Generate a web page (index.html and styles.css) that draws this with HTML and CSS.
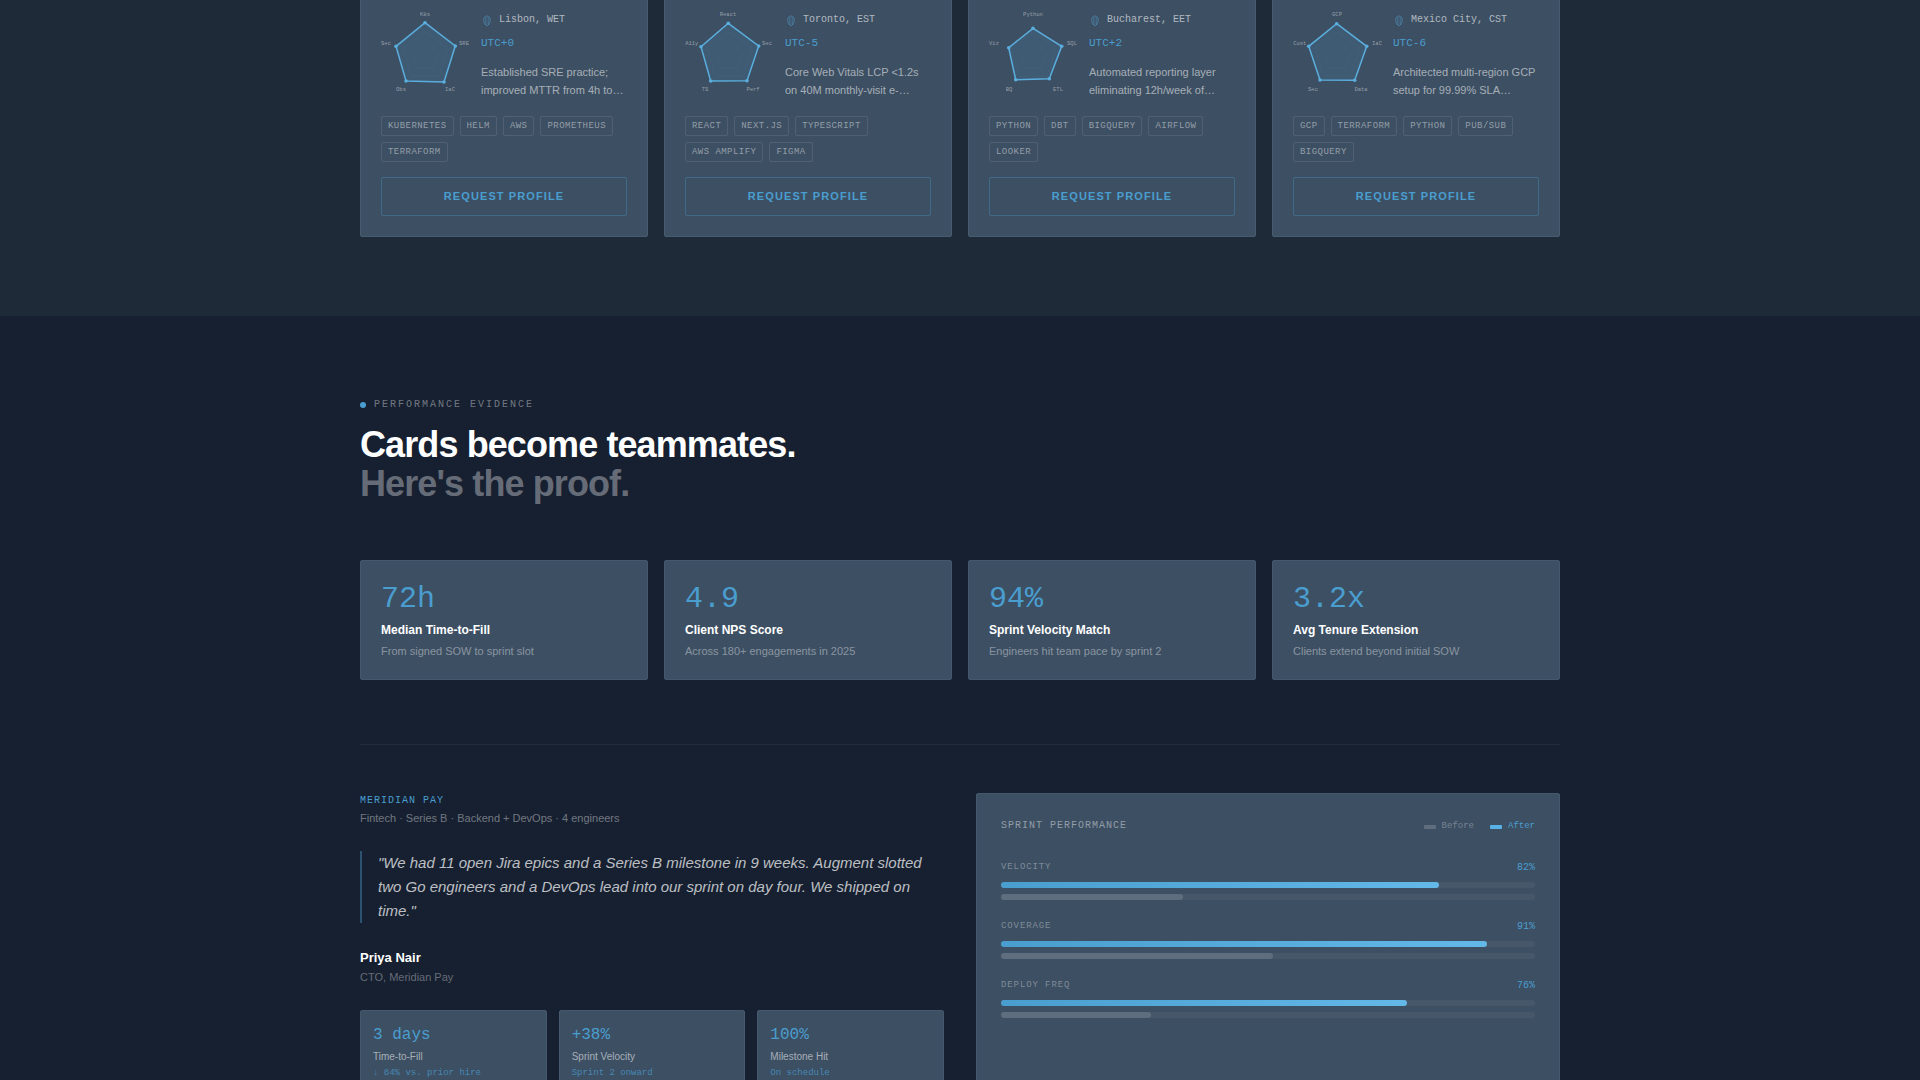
FILE: index.html
```html
<!DOCTYPE html>
<html>
<head>
    <link rel="stylesheet" href="styles.css">
</head>
<body>
    <section class="talent-section">
        <div class="wrap card-grid">
            <div class="card">
                <div class="card-top">
                    <svg class="radar" width="90" height="90" viewBox="0 0 90 90">
                        <polygon class="ring" points="44,32 58,42 53,58 36,58 31,42"/>
                        <polygon class="ring" points="44,22 67,38 58,66 31,66 22,38"/>
                        <polygon class="shape" points="44,12.7 74.3,36 63,72 25,71 15,36.3"/>
                        <circle class="dot" cx="44" cy="12.7" r="1.8"/><circle class="dot" cx="74.3" cy="36" r="1.8"/><circle class="dot" cx="63" cy="72" r="1.8"/><circle class="dot" cx="25" cy="71" r="1.8"/><circle class="dot" cx="15" cy="36.3" r="1.8"/>
                        <text x="44" y="6">K8s</text><text x="83" y="35">SRE</text><text x="69" y="81">IaC</text><text x="20" y="81">Obs</text><text x="5" y="35">Sec</text>
                    </svg>
                    <div class="card-info">
                        <div class="location">
                            <svg class="pin" width="12" height="12" viewBox="0 0 12 12"><path d="M6 1C4 1 2.7 2.6 2.7 5c0 2.6 1.6 5 3.3 6 1.7-1 3.3-3.4 3.3-6C9.3 2.6 8 1 6 1z"/><path d="M4.8 2v8M7.2 2v8"/></svg>
                            Lisbon, WET
                        </div>
                        <div class="utc">UTC+0</div>
                        <p class="desc">Established SRE practice; improved MTTR from 4h to…</p>
                    </div>
                </div>
                <div class="tags">
                    <span class="tag">Kubernetes</span><span class="tag">Helm</span><span class="tag">AWS</span><span class="tag">Prometheus</span><span class="tag">Terraform</span>
                </div>
                <button class="request-btn" type="button">REQUEST PROFILE</button>
            </div>

            <div class="card">
                <div class="card-top">
                    <svg class="radar" width="90" height="90" viewBox="0 0 90 90">
                        <polygon class="ring" points="44,32 58,42 53,58 36,58 31,42"/>
                        <polygon class="ring" points="44,22 67,38 58,66 31,66 22,38"/>
                        <polygon class="shape" points="43.3,13.3 73.7,36 62,70.7 25.7,71 16,36.7"/>
                        <circle class="dot" cx="43.3" cy="13.3" r="1.8"/><circle class="dot" cx="73.7" cy="36" r="1.8"/><circle class="dot" cx="62" cy="70.7" r="1.8"/><circle class="dot" cx="25.7" cy="71" r="1.8"/><circle class="dot" cx="16" cy="36.7" r="1.8"/>
                        <text x="43" y="6">React</text><text x="82" y="35">Sec</text><text x="68" y="81">Perf</text><text x="20" y="81">TS</text><text x="6.8" y="35">A11y</text>
                    </svg>
                    <div class="card-info">
                        <div class="location">
                            <svg class="pin" width="12" height="12" viewBox="0 0 12 12"><path d="M6 1C4 1 2.7 2.6 2.7 5c0 2.6 1.6 5 3.3 6 1.7-1 3.3-3.4 3.3-6C9.3 2.6 8 1 6 1z"/><path d="M4.8 2v8M7.2 2v8"/></svg>
                            Toronto, EST
                        </div>
                        <div class="utc">UTC-5</div>
                        <p class="desc">Core Web Vitals LCP &lt;1.2s on 40M monthly-visit e-…</p>
                    </div>
                </div>
                <div class="tags">
                    <span class="tag">React</span><span class="tag">Next.js</span><span class="tag">TypeScript</span><span class="tag">AWS Amplify</span><span class="tag">Figma</span>
                </div>
                <button class="request-btn" type="button">REQUEST PROFILE</button>
            </div>

            <div class="card">
                <div class="card-top">
                    <svg class="radar" width="90" height="90" viewBox="0 0 90 90">
                        <polygon class="ring" points="44,32 58,42 53,58 36,58 31,42"/>
                        <polygon class="ring" points="44,22 67,38 58,66 31,66 22,38"/>
                        <polygon class="shape" points="44,18.3 72.7,36.3 60.3,68.7 26.7,69.7 19.7,37.7"/>
                        <circle class="dot" cx="44" cy="18.3" r="1.8"/><circle class="dot" cx="72.7" cy="36.3" r="1.8"/><circle class="dot" cx="60.3" cy="68.7" r="1.8"/><circle class="dot" cx="26.7" cy="69.7" r="1.8"/><circle class="dot" cx="19.7" cy="37.7" r="1.8"/>
                        <text x="44" y="6">Python</text><text x="83" y="35">SQL</text><text x="69" y="81">ETL</text><text x="20" y="81">BQ</text><text x="5" y="35">Viz</text>
                    </svg>
                    <div class="card-info">
                        <div class="location">
                            <svg class="pin" width="12" height="12" viewBox="0 0 12 12"><path d="M6 1C4 1 2.7 2.6 2.7 5c0 2.6 1.6 5 3.3 6 1.7-1 3.3-3.4 3.3-6C9.3 2.6 8 1 6 1z"/><path d="M4.8 2v8M7.2 2v8"/></svg>
                            Bucharest, EET
                        </div>
                        <div class="utc">UTC+2</div>
                        <p class="desc">Automated reporting layer eliminating 12h/week of…</p>
                    </div>
                </div>
                <div class="tags">
                    <span class="tag">Python</span><span class="tag">dbt</span><span class="tag">BigQuery</span><span class="tag">Airflow</span><span class="tag">Looker</span>
                </div>
                <button class="request-btn" type="button">REQUEST PROFILE</button>
            </div>

            <div class="card">
                <div class="card-top">
                    <svg class="radar" width="90" height="90" viewBox="0 0 90 90">
                        <polygon class="ring" points="44,32 58,42 53,58 36,58 31,42"/>
                        <polygon class="ring" points="44,22 67,38 58,66 31,66 22,38"/>
                        <polygon class="shape" points="43.7,13.7 73.7,36.3 61.7,70.3 27,70 15.7,36.3"/>
                        <circle class="dot" cx="43.7" cy="13.7" r="1.8"/><circle class="dot" cx="73.7" cy="36.3" r="1.8"/><circle class="dot" cx="61.7" cy="70.3" r="1.8"/><circle class="dot" cx="27" cy="70" r="1.8"/><circle class="dot" cx="15.7" cy="36.3" r="1.8"/>
                        <text x="44" y="6">GCP</text><text x="84" y="35">IaC</text><text x="68" y="81">Data</text><text x="20" y="81">Sec</text><text x="6.8" y="35">Cost</text>
                    </svg>
                    <div class="card-info">
                        <div class="location">
                            <svg class="pin" width="12" height="12" viewBox="0 0 12 12"><path d="M6 1C4 1 2.7 2.6 2.7 5c0 2.6 1.6 5 3.3 6 1.7-1 3.3-3.4 3.3-6C9.3 2.6 8 1 6 1z"/><path d="M4.8 2v8M7.2 2v8"/></svg>
                            Mexico City, CST
                        </div>
                        <div class="utc">UTC-6</div>
                        <p class="desc">Architected multi-region GCP setup for 99.99% SLA…</p>
                    </div>
                </div>
                <div class="tags">
                    <span class="tag">GCP</span><span class="tag">Terraform</span><span class="tag">Python</span><span class="tag">Pub/Sub</span><span class="tag">BigQuery</span>
                </div>
                <button class="request-btn" type="button">REQUEST PROFILE</button>
            </div>
        </div>
    </section>

    <section class="evidence-section">
        <div class="wrap">
            <div class="eyebrow"><span class="eyebrow-dot"></span>PERFORMANCE EVIDENCE</div>
            <h2 class="headline">Cards become teammates.<br><span class="headline-dim">Here's the proof.</span></h2>

            <div class="stat-grid">
                <div class="stat">
                    <div class="stat-value">72h</div>
                    <div class="stat-title">Median Time-to-Fill</div>
                    <div class="stat-sub">From signed SOW to sprint slot</div>
                </div>
                <div class="stat">
                    <div class="stat-value">4.9</div>
                    <div class="stat-title">Client NPS Score</div>
                    <div class="stat-sub">Across 180+ engagements in 2025</div>
                </div>
                <div class="stat">
                    <div class="stat-value">94%</div>
                    <div class="stat-title">Sprint Velocity Match</div>
                    <div class="stat-sub">Engineers hit team pace by sprint 2</div>
                </div>
                <div class="stat">
                    <div class="stat-value">3.2x</div>
                    <div class="stat-title">Avg Tenure Extension</div>
                    <div class="stat-sub">Clients extend beyond initial SOW</div>
                </div>
            </div>

            <hr class="divider">

            <div class="case">
                <div class="case-left">
                    <div class="case-client">MERIDIAN PAY</div>
                    <div class="case-meta">Fintech · Series B · Backend + DevOps · 4 engineers</div>
                    <blockquote class="quote">"We had 11 open Jira epics and a Series B milestone in 9 weeks. Augment slotted two Go engineers and a DevOps lead into our sprint on day four. We shipped on time."</blockquote>
                    <div class="author">Priya Nair</div>
                    <div class="author-role">CTO, Meridian Pay</div>
                    <div class="mini-grid">
                        <div class="mini">
                            <div class="mini-value">3 days</div>
                            <div class="mini-label">Time-to-Fill</div>
                            <div class="mini-note">↓ 84% vs. prior hire</div>
                        </div>
                        <div class="mini">
                            <div class="mini-value">+38%</div>
                            <div class="mini-label">Sprint Velocity</div>
                            <div class="mini-note">Sprint 2 onward</div>
                        </div>
                        <div class="mini">
                            <div class="mini-value">100%</div>
                            <div class="mini-label">Milestone Hit</div>
                            <div class="mini-note">On schedule</div>
                        </div>
                    </div>
                </div>

                <div class="panel">
                    <div class="panel-head">
                        <div class="panel-title">SPRINT PERFORMANCE</div>
                        <div class="legend">
                            <span class="legend-item"><span class="swatch swatch-before"></span>Before</span>
                            <span class="legend-item legend-after"><span class="swatch swatch-after"></span>After</span>
                        </div>
                    </div>

                    <div class="metric">
                        <div class="metric-head"><span>VELOCITY</span><span class="metric-val">82%</span></div>
                        <div class="track"><div class="fill-after" style="width: 82%"></div></div>
                        <div class="track"><div class="fill-before" style="width: 34%"></div></div>
                    </div>
                    <div class="metric">
                        <div class="metric-head"><span>COVERAGE</span><span class="metric-val">91%</span></div>
                        <div class="track"><div class="fill-after" style="width: 91%"></div></div>
                        <div class="track"><div class="fill-before" style="width: 51%"></div></div>
                    </div>
                    <div class="metric">
                        <div class="metric-head"><span>DEPLOY FREQ</span><span class="metric-val">76%</span></div>
                        <div class="track"><div class="fill-after" style="width: 76%"></div></div>
                        <div class="track"><div class="fill-before" style="width: 28%"></div></div>
                    </div>
                </div>
            </div>
        </div>
    </section>
</body>
</html>
```

FILE: styles.css
```css
html, body {
    margin: 0;
    height: 1080px;
    overflow: hidden;
}

body {
    font-family: "Liberation Sans", Arial, sans-serif;
    background-color: #162030;
    color: #fff;
}

.wrap {
    width: 1200px;
    margin: 0 auto;
}

/* top section, page is scrolled so the cards start above the fold */
.talent-section {
    margin-top: -11px;
    padding-bottom: 79px;
    background-color: #1e2a38;
}

.card-grid {
    display: grid;
    grid-template-columns: repeat(4, 1fr);
    gap: 16px;
}

.card {
    padding: 20px;
    background-color: #3d4f63;
    border: 1px solid #495b70;
    border-radius: 2px;
}

.card-top {
    display: flex;
    gap: 10px;
}

.radar {
    flex: none;
    overflow: visible;
}

.radar text {
    font-family: "Liberation Mono", monospace;
    font-size: 5.5px;
    fill: rgba(255, 255, 255, 0.45);
    text-anchor: middle;
}

.ring {
    fill: none;
    stroke: rgba(255, 255, 255, 0.05);
    stroke-width: 0.5;
}

.shape {
    fill: rgba(74, 158, 207, 0.16);
    stroke: #5aaedd;
    stroke-width: 1.5;
}

.dot {
    fill: #5aaedd;
}

.card-info {
    flex: 1;
    min-width: 0;
    padding-top: 1px;
}

.location {
    display: flex;
    align-items: center;
    gap: 6px;
    font-family: "Liberation Mono", monospace;
    font-size: 10px;
    line-height: 18px;
    color: rgba(255, 255, 255, 0.6);
}

.pin {
    flex: none;
    margin-top: 2px;
    fill: none;
    stroke: rgba(86, 168, 218, 0.45);
    stroke-width: 1;
}

.utc {
    margin-top: 8px;
    font-family: "Liberation Mono", monospace;
    font-size: 11px;
    line-height: 13px;
    color: #4a9ecf;
}

.desc {
    margin: 13px 0 0;
    font-size: 11px;
    line-height: 18px;
    color: rgba(255, 255, 255, 0.55);
}

.tags {
    display: flex;
    flex-wrap: wrap;
    gap: 6px;
    margin-top: 16px;
}

.tag {
    padding: 3px 6px;
    font-family: "Liberation Mono", monospace;
    font-size: 9px;
    line-height: 12px;
    letter-spacing: 0.45px;
    text-transform: uppercase;
    color: rgba(255, 255, 255, 0.45);
    border: 1px solid rgba(255, 255, 255, 0.1);
    border-radius: 2px;
}

.request-btn {
    display: block;
    width: 100%;
    margin-top: 15px;
    padding: 12px;
    font-family: "Liberation Sans", Arial, sans-serif;
    font-size: 11px;
    font-weight: 700;
    line-height: 13px;
    letter-spacing: 1.1px;
    color: #4a9ecf;
    background: transparent;
    border: 1px solid rgba(74, 158, 207, 0.35);
    border-radius: 2px;
}

/* evidence section */
.evidence-section {
    padding-top: 82px;
}

.eyebrow {
    display: flex;
    align-items: center;
    gap: 8px;
    font-family: "Liberation Mono", monospace;
    font-size: 10px;
    line-height: 14px;
    letter-spacing: 2px;
    color: rgba(255, 255, 255, 0.4);
}

.eyebrow-dot {
    width: 6px;
    height: 6px;
    border-radius: 50%;
    background-color: #4a9ecf;
}

.headline {
    margin: 13px 0 57px;
    font-size: 36px;
    font-weight: 700;
    line-height: 39px;
    letter-spacing: -0.9px;
}

.headline-dim {
    color: rgba(255, 255, 255, 0.35);
}

.stat-grid {
    display: grid;
    grid-template-columns: repeat(4, 1fr);
    gap: 16px;
}

.stat {
    padding: 22px 20px 20px;
    background-color: #3d4f63;
    border: 1px solid #46586d;
    border-radius: 2px;
}

.stat-value {
    font-family: "Liberation Mono", monospace;
    font-size: 30px;
    line-height: 32px;
    color: #4a9ecf;
}

.stat-title {
    margin-top: 7px;
    font-size: 12px;
    font-weight: 700;
    line-height: 16px;
}

.stat-sub {
    margin-top: 6px;
    font-size: 11px;
    line-height: 15px;
    color: rgba(255, 255, 255, 0.4);
}

.divider {
    height: 1px;
    margin: 64px 0 48px;
    border: 0;
    background-color: #202b3b;
}

.case {
    display: grid;
    grid-template-columns: 1fr 1fr;
    gap: 32px;
}

.case-client {
    padding-top: 1px;
    font-family: "Liberation Mono", monospace;
    font-size: 10px;
    line-height: 14px;
    letter-spacing: 1px;
    color: #4a9ecf;
}

.case-meta {
    margin-top: 3px;
    font-size: 11px;
    line-height: 14px;
    color: rgba(255, 255, 255, 0.4);
}

.quote {
    margin: 26px 0 0;
    padding-left: 16px;
    font-size: 15px;
    font-style: italic;
    line-height: 24px;
    color: rgba(255, 255, 255, 0.72);
    border-left: 2px solid rgba(74, 158, 207, 0.4);
}

.author {
    margin-top: 27px;
    font-size: 13px;
    font-weight: 700;
    line-height: 16px;
}

.author-role {
    margin-top: 4px;
    font-size: 11px;
    line-height: 14px;
    color: rgba(255, 255, 255, 0.35);
}

.mini-grid {
    display: grid;
    grid-template-columns: repeat(3, 1fr);
    gap: 12px;
    margin-top: 26px;
}

.mini {
    padding: 13px 12px 12px;
    background-color: #3d4f63;
    border: 1px solid #46586d;
    border-radius: 2px;
}

.mini-value {
    font-family: "Liberation Mono", monospace;
    font-size: 16px;
    line-height: 22px;
    color: #4a9ecf;
}

.mini-label {
    margin-top: 4px;
    font-size: 10px;
    line-height: 14px;
    color: rgba(255, 255, 255, 0.55);
}

.mini-note {
    margin-top: 3px;
    font-family: "Liberation Mono", monospace;
    font-size: 9px;
    line-height: 12px;
    color: rgba(74, 158, 207, 0.75);
}

.panel {
    padding: 25px 24px 24px;
    background-color: #3d4f63;
    border: 1px solid #46586d;
    border-radius: 2px;
}

.panel-head {
    display: flex;
    justify-content: space-between;
    align-items: center;
    margin-bottom: 27px;
}

.panel-title {
    font-family: "Liberation Mono", monospace;
    font-size: 10px;
    line-height: 14px;
    letter-spacing: 1px;
    color: rgba(255, 255, 255, 0.45);
}

.legend {
    display: flex;
    gap: 16px;
}

.legend-item {
    display: flex;
    align-items: center;
    gap: 6px;
    font-family: "Liberation Mono", monospace;
    font-size: 9px;
    color: rgba(255, 255, 255, 0.3);
}

.legend-after {
    color: #4a9ecf;
}

.swatch {
    width: 12px;
    height: 4px;
    margin-top: 2px;
    border-radius: 1px;
}

.swatch-before {
    background-color: #5f6e7e;
}

.swatch-after {
    background-color: #58b0e4;
}

.metric {
    margin-bottom: 19px;
}

.metric-head {
    display: flex;
    justify-content: space-between;
    margin-bottom: 7px;
    font-family: "Liberation Mono", monospace;
    font-size: 9px;
    line-height: 14px;
    letter-spacing: 0.9px;
    color: rgba(255, 255, 255, 0.35);
}

.metric-val {
    padding-top: 1px;
    font-size: 10px;
    letter-spacing: 0;
    color: #4a9ecf;
}

.track {
    height: 6px;
    margin-top: 6px;
    border-radius: 3px;
    background-color: rgba(255, 255, 255, 0.05);
}

.metric-head + .track {
    margin-top: 0;
}

.fill-after,
.fill-before {
    height: 100%;
    border-radius: 3px;
}

.fill-after {
    background: linear-gradient(90deg, #4a9ecf, #63b8e8);
}

.fill-before {
    background-color: #5f6e7e;
}
```
